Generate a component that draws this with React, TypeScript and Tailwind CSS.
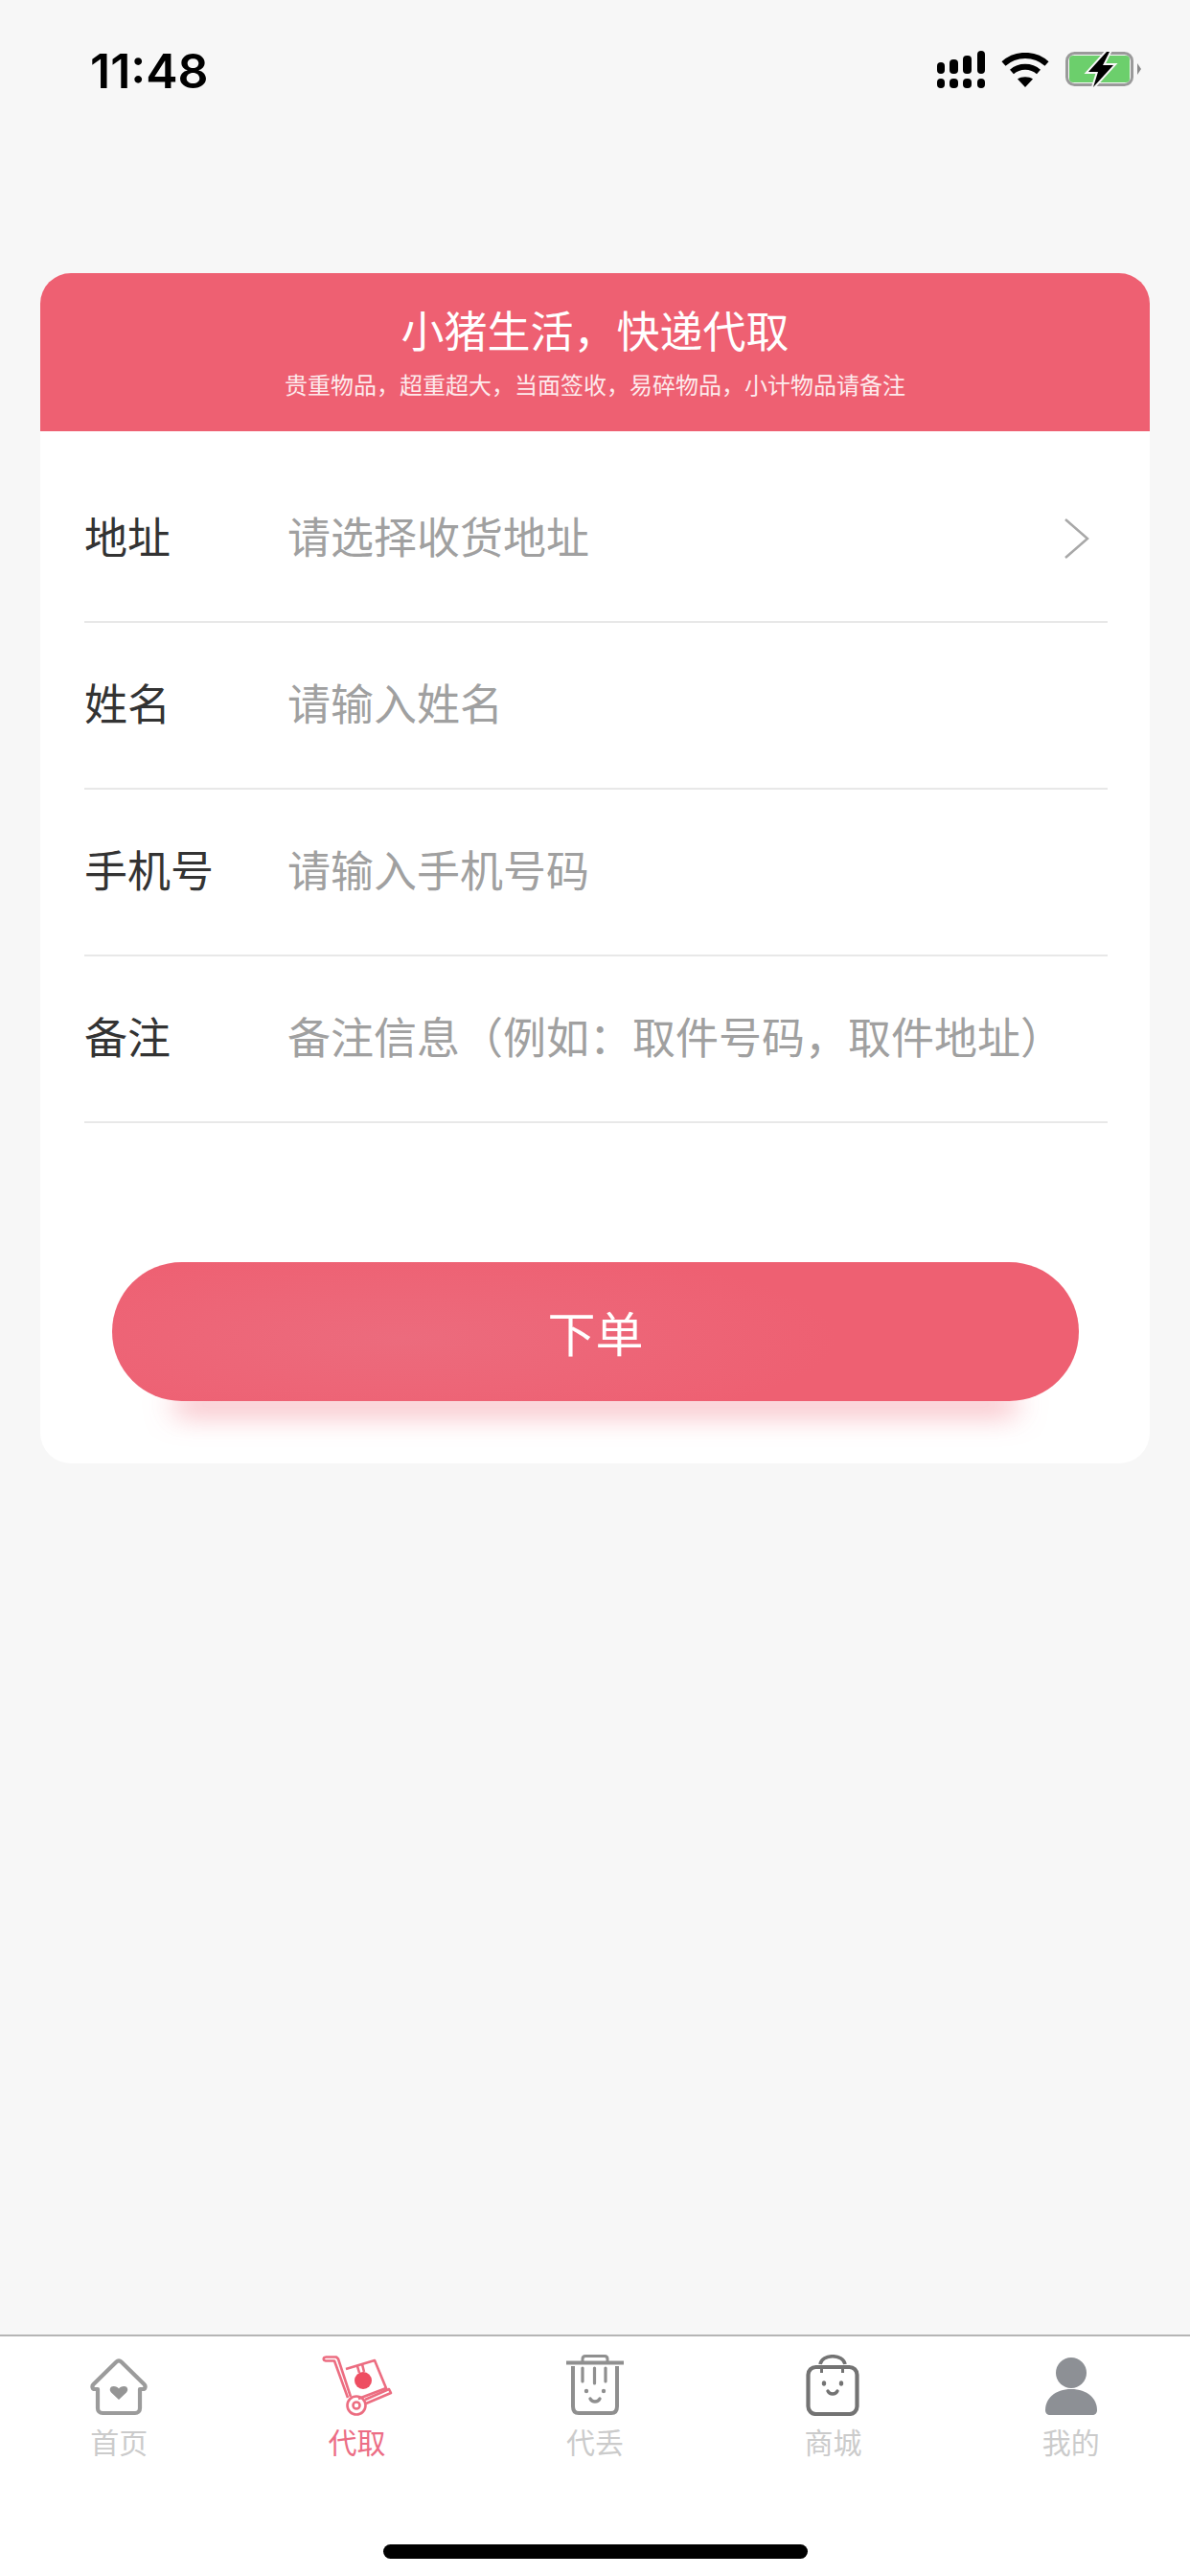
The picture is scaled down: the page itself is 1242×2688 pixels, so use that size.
import React from "react";

function Signal() {
  return (
    <svg width="50" height="39" viewBox="0 0 50 39" fill="#000">
      <rect x="0" y="12" width="8" height="12" rx="4" />
      <rect x="13" y="9" width="9" height="15" rx="4" />
      <rect x="27" y="5" width="9" height="19" rx="4" />
      <rect x="42" y="0" width="8" height="24" rx="4" />
      <rect x="0" y="29" width="8" height="10" rx="4" />
      <rect x="13" y="29" width="9" height="10" rx="4" />
      <rect x="27" y="29" width="9" height="10" rx="4" />
      <rect x="42" y="29" width="8" height="10" rx="4" />
    </svg>
  );
}

function Wifi() {
  return (
    <svg width="50" height="36" viewBox="0 0 50 36" fill="none">
      <path d="M2.500 11.500C15 0 35 0 47.500 11.500" stroke="#000" strokeWidth="6" />
      <path d="M11 20C19 13 31 13 39 20" stroke="#000" strokeWidth="6" />
      <path d="M17 27.500C21 24.500 29 24.500 33 27.500L25 36Z" fill="#000" />
    </svg>
  );
}

function Battery() {
  return (
    <svg width="80" height="37" viewBox="0 0 80 37" fill="none">
      <rect x="1.500" y="1.500" width="68" height="33" rx="8" stroke="#9a9a9a" strokeWidth="3" />
      <rect x="4" y="4" width="63" height="28" rx="4" fill="#6ccf6c" />
      <path d="M75 12L79 18L75 24Z" fill="#8a8a8a" />
      <path d="M43 0L24 21H34L29 37L50 14H39L46 0Z" fill="#000" stroke="#f7f7f7" strokeWidth="4" paintOrder="stroke" />
    </svg>
  );
}

function HomeIcon() {
  return (
    <svg width="60" height="60" viewBox="0 0 60 60" fill="none">
      <path
        d="M27.500 3.500C29 2 31 2 32.500 3.500L56.500 27C58.500 29 57.500 32 55 32H52V52C52 55 50 57 47 57H13C10 57 8 55 8 52V32H5C2.500 32 1.500 29 3.500 27Z"
        stroke="#9b9b9b"
        strokeWidth="4.200"
        strokeLinejoin="round"
      />
      <path d="M30 43L22 35.500C19.500 32.500 21 29 24.500 29C27 29 29 30 30 31.500C31 30 33 29 35.500 29C39 29 40.500 32.500 38 35.500Z" fill="#959595" />
    </svg>
  );
}

function CartIcon() {
  return (
    <svg width="74" height="64" viewBox="0 0 74 64" fill="none" stroke="#ec6d81" strokeWidth="2.600">
      <path d="M4 2.500H15L17 4.500L30 44" strokeLinejoin="round" />
      <path d="M4 2.500C1 3 1 6 4 6.500H13L27 45" strokeLinejoin="round" />
      <circle cx="36" cy="53" r="9.500" />
      <circle cx="36" cy="53" r="3.500" />
      <path d="M45 47L70 36L72 40L46 51" strokeLinejoin="round" />
      <path d="M25 15L55 6L67 35L38 46" strokeLinejoin="round" />
      <path d="M37 12L39 19M42 10L44 18" />
      <circle cx="43" cy="27" r="9" fill="#ee4d61" stroke="none" />
    </svg>
  );
}

function TrashIcon() {
  return (
    <svg width="60" height="64" viewBox="0 0 60 64" fill="none" stroke="#8f8f8f">
      <path d="M0 8.500H60" strokeWidth="4" />
      <path d="M17 7V4.500C17 2.500 18 1.500 20 1.500H40C42 1.500 43 2.500 43 4.500V7" strokeWidth="3" />
      <path d="M7 12V54C7 59 9 61 13 61H47C51 61 53 59 53 54V12" strokeWidth="4" />
      <path d="M17 14V28M29.500 14V30M41 14V28" strokeWidth="3.200" strokeLinecap="round" />
      <circle cx="21" cy="38" r="2.200" fill="#8f8f8f" stroke="none" />
      <circle cx="39" cy="38" r="2.200" fill="#8f8f8f" stroke="none" />
      <path d="M25 46C27 50 33 50 35 46" strokeWidth="3.400" strokeLinecap="round" />
    </svg>
  );
}

function BagIcon() {
  return (
    <svg width="56" height="64" viewBox="0 0 56 64" fill="none" stroke="#737373">
      <rect x="2.500" y="13" width="51" height="49" rx="8" strokeWidth="4.200" />
      <path d="M15 10C17 -1 39 -1 41 10" strokeWidth="3.600" />
      <path d="M16.500 13V19M38.500 13V19" strokeWidth="3" />
      <ellipse cx="19" cy="30" rx="2.200" ry="2.800" fill="#737373" stroke="none" />
      <ellipse cx="37" cy="30" rx="2.200" ry="2.800" fill="#737373" stroke="none" />
      <path d="M23 38C25 42 31 42 33 38" strokeWidth="3.400" strokeLinecap="round" />
    </svg>
  );
}

function PersonIcon() {
  return (
    <svg width="54" height="62" viewBox="0 0 54 62" fill="#8d9095">
      <ellipse cx="27" cy="17" rx="16" ry="16" />
      <path d="M0 56C0 44 10 34 27 34C44 34 54 44 54 56C54 59 52 61 49 61H5C2 61 0 59 0 56Z" />
    </svg>
  );
}

function Row({ label, placeholder, arrow }: { label: string; placeholder: string; arrow?: boolean }) {
  return (
    <div className="flex h-[174px] items-center border-b-2 border-[#e8e8e8]">
      <span className="mb-[6px] w-[212px] shrink-0 text-[45px] text-[#333333]">{label}</span>
      <span className="mb-[6px] flex-1 whitespace-nowrap text-[45px] text-[#a0a0a0]">{placeholder}</span>
      {arrow && (
        <svg width="28" height="44" viewBox="0 0 28 44" fill="none" className="mr-[18px]">
          <path d="M2 2L25 22L2 42" stroke="#a8a8a8" strokeWidth="2.500" />
        </svg>
      )}
    </div>
  );
}

function Tab({ label, icon, active }: { label: string; icon: React.ReactNode; active?: boolean }) {
  return (
    <div className="flex flex-col items-center">
      <div className="flex h-[64px] items-end justify-center">{icon}</div>
      <span className={active ? "mt-[6px] text-[30px] leading-[40px] text-[#ec6d85]" : "mt-[6px] text-[30px] leading-[40px] text-[#cbcbcb]"}>
        {label}
      </span>
    </div>
  );
}

export default function App() {
  return (
    <div className="flex h-[2688px] w-[1242px] flex-col overflow-hidden bg-[#f7f7f7] font-['Noto_Sans_CJK_SC','Noto_Sans',sans-serif] font-normal">
      <div className="flex h-[285px] shrink-0 items-start justify-between pt-[48px] pr-[50px] pl-[94px]">
        <span className="font-['Inter',sans-serif] text-[50px] leading-[52px] font-semibold text-black">11:48</span>
        <div className="flex items-center gap-[17px] pt-[5px]">
          <Signal />
          <Wifi />
          <Battery />
        </div>
      </div>

      <div className="mx-[42px] h-[1242px] shrink-0 overflow-hidden rounded-[32px] bg-white">
        <div className="flex h-[165px] flex-col items-center bg-[#ee6072] pt-[28px] text-white">
          <span className="text-[45px] leading-[62px]">小猪生活，快递代取</span>
          <span className="mt-[11px] text-[24px] leading-[30px] text-[#fdeaec]">贵重物品，超重超大，当面签收，易碎物品，小计物品请备注</span>
        </div>
        <div className="pt-[26px] pr-[44px] pl-[46px]">
          <Row label="地址" placeholder="请选择收货地址" arrow />
          <Row label="姓名" placeholder="请输入姓名" />
          <Row label="手机号" placeholder="请输入手机号码" />
          <Row label="备注" placeholder="备注信息（例如：取件号码，取件地址）" />
        </div>
        <div className="mt-[145px] mr-[74px] ml-[75px] flex h-[145px] items-center justify-center rounded-full bg-[radial-gradient(ellipse_45%_70%_at_30%_55%,#ec6b7d,#ee6072)] text-[50px] text-white shadow-[0_76px_30px_-64px_rgba(239,97,114,0.6)]">
          下单
        </div>
      </div>

      <div className="flex-1" />

      <div className="h-[252px] shrink-0 border-t-2 border-[#b5b5b5] bg-white">
        <div className="grid grid-cols-5 pt-[19px]">
          <Tab label="首页" icon={<HomeIcon />} />
          <Tab label="代取" icon={<CartIcon />} active />
          <Tab label="代丢" icon={<TrashIcon />} />
          <Tab label="商城" icon={<BagIcon />} />
          <Tab label="我的" icon={<PersonIcon />} />
        </div>
        <div className="mx-auto mt-[88px] h-[15px] w-[443px] rounded-full bg-black" />
      </div>
    </div>
  );
}
